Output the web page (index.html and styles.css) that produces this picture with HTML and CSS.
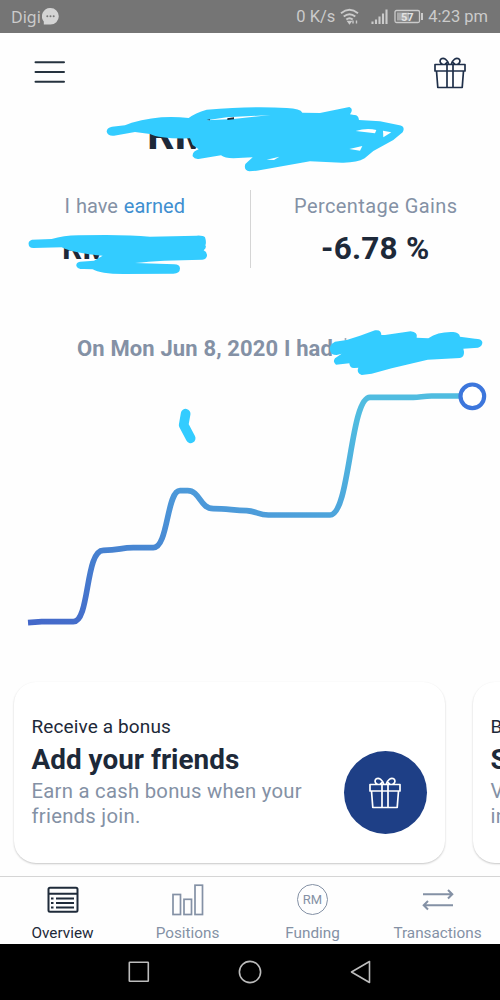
FILE: index.html
```
<!DOCTYPE html>
<html lang="en">
<head>
<meta charset="utf-8">
<title>Overview</title>
<link rel="stylesheet" href="styles.css">
</head>
<body>
<svg class="defs" width="0" height="0">
  <symbol id="gift" viewBox="0 0 32 32">
    <path d="M1 7.500H31V14H1ZM2.500 14L3.800 30.500H28.200L29.500 14M13 7.500V30.500M19 7.500V30.500M9 7.500C6 6.500 5.200 3.500 7.200 1.800C10 .2 13 2.500 14.800 7.200M11 7.300L14 4.500M23 7.500C26 6.500 26.800 3.500 24.800 1.800C22 .2 19 2.500 17.200 7.200M21 7.300L18 4.500"/>
  </symbol>
</svg>
<div class="phone">
  <div class="status">
    <span class="carrier">Digi</span>
    <svg class="bubble" width="17" height="17" viewBox="0 0 17 17"><path d="M8.5 0A8.3 8.3 0 1 1 8.5 16.6H1.8V13.5A8.3 8.3 0 0 1 8.5 0Z" fill="#d4d4d4"/><g fill="#777"><circle cx="5.3" cy="8.3" r="1"/><circle cx="8.5" cy="8.3" r="1"/><circle cx="11.7" cy="8.3" r="1"/></g></svg>
    <span class="speed">0 K/s</span>
    <svg class="signals" width="84" height="18" viewBox="0 0 84 18" fill="none" stroke="#cbcbcb">
      <path d="M1 5.2Q9.500-1.600 18 5.200M3.700 8.500Q9.500 3.800 15.300 8.500M6.300 11.500Q9.500 8.900 12.700 11.500" stroke-width="1.900"/>
      <path d="M8 13.500H11L9.500 15.500ZM13 12.500V15.500M16.500 12.500V15.500" stroke-width="1.400"/>
      <path d="M32.500 16V13.500M36 16V11.500M39.500 16V8.500M43 16V5.500M46.500 16V1.500" stroke-width="2.100"/>
      <rect x="55" y="2.500" width="24.500" height="12" rx="1.500" stroke-width="1.300"/>
      <rect x="57" y="4.500" width="12" height="8" fill="#aaa" stroke="none"/>
      <path d="M82 5V12" stroke-width="2"/>
      <text class="charge" x="61" y="13" stroke="none" fill="#e2e2e2">57</text>
    </svg>
    <span class="time">4:23 pm</span>
  </div>

  <header class="header">
    <svg width="32" height="24" viewBox="0 0 32 24" stroke="#26333f" stroke-width="2" stroke-linecap="round"><path d="M1.500 2.200H30M1.500 12H30M1.500 21.800H30"/></svg>
    <svg class="gift" width="32" height="32"><use href="#gift"/></svg>
  </header>

  <section class="balance">
    <span class="balance-value">RM</span>
    <svg class="scribble scribble-balance" viewBox="0 0 990 270">
      <path d="M66 95Q50 98 50 110Q54 124 72 122L135 111L180 117Q210 132 300 130L308 150L326 163Q306 170 308 184Q314 194 330 191L393 181Q404 190 430 190L488 187L466 207Q460 226 478 229L500 227L660 199L755 203Q800 204 824 190L850 168L910 135L938 112Q948 93 925 90L870 79L807 75Q805 59 792 60L780 58Q792 42 778 36L690 54L637 53Q632 41 590 39Q490 32 350 44Q315 54 296 69Q210 58 125 83L105 91Z" fill="#33ccff"/>
      <g fill="#fff"><path d="M350 76L410 67L542 60L430 72Z"/><path d="M797 108Q830 98 859 105L855 115Z"/><path d="M879 107L904 112L880 127Z"/><path d="M778 162L817 153L810 167Z"/><path d="M530 194L568 185L552 195Z"/></g>
      <path d="M412 70L432 67V73L412 75ZM350 75L360 73V76Z" fill="#1d2939"/>
    </svg>
  </section>

  <section class="stats">
    <div class="stat">
      <div class="stat-label earned">I have <span class="link">earned</span></div>
      <div class="stat-value hidden-value">RM</div>
      <svg class="scribble scribble-earned" viewBox="0 0 750 300"><path d="M96 164Q84 168 86 178Q86 189 100 189L185 187Q220 205 308 212L282 227L240 230Q228 232 229 242Q232 253 252 252L278 253Q300 267 370 267L520 266Q540 266 540 250Q539 238 523 238L405 234Q480 225 607 224Q622 221 621 209Q620 200 611 196Q621 187 616 181Q620 172 615 157Q610 151 590 152L450 155Q370 147 235 151Q190 152 155 162Z" fill="#33ccff"/></svg>
    </div>
    <div class="stat">
      <div class="stat-label gains">Percentage Gains</div>
      <div class="stat-value">-6.78 %</div>
    </div>
  </section>

  <section class="history">
    <h2 class="history-title">On Mon Jun 8, 2020 I had</h2>
    <svg class="chart" width="500" height="270" viewBox="0 0 1500 810" fill="none">
      <defs><linearGradient id="line" gradientUnits="userSpaceOnUse" x1="350" y1="900" x2="800" y2="0"><stop offset="0" stop-color="#4467c9"/><stop offset=".3" stop-color="#4681d0"/><stop offset=".55" stop-color="#4c98d9"/><stop offset="1" stop-color="#50bce0"/></linearGradient></defs>
      <path d="M84 758L125 755H220C270 755 255 541 310 541C360 541 360 533 400 533H460C505 533 500 362 540 362H563C600 362 600 416 640 416C680 416 700 421 740 422C770 424 775 435 805 435H990C1050 435 1050 82 1110 82H1240C1260 82 1270 78 1295 78H1380" stroke="url(#line)" stroke-width="17"/>
      <circle cx="1417" cy="79" r="35.500" fill="#fff" stroke="#3c76dc" stroke-width="12.500"/>
      <path d="M557 131L551 165L572 205" stroke="#33ccff" stroke-width="29" stroke-linecap="round" stroke-linejoin="round"/>
    </svg>
    <svg class="scribble scribble-history" viewBox="0 0 1320 390"><path d="M854 54L859 54V62H854Z" fill="#a0abba"/><path d="M825 65Q806 75 810 90Q811 105 830 105L845 101L825 115Q817 125 828 134L868 130Q869 145 883 144L895 143Q888 158 905 165L935 161L995 145L1103 119L1200 114Q1213 111 1212 95L1210 86L1254 83Q1268 78 1267 66Q1265 56 1245 56L1200 50Q1198 38 1180 36Q1135 34 1105 55L1070 53Q1074 36 1052 34L975 45L964 45Q964 28 945 31L900 47L860 60Z" fill="#33ccff"/></svg>
  </section>

  <section class="cards">
    <article class="card">
      <div class="card-copy">
        <div class="card-kicker">Receive a bonus</div>
        <h3 class="card-title">Add your friends</h3>
        <p class="card-text">Earn a cash bonus when your<br>friends join.</p>
      </div>
      <div class="card-badge"><svg class="gift gift-light" width="32" height="32"><use href="#gift"/></svg></div>
    </article>
    <article class="card card-next">
      <div class="card-copy">
        <div class="card-kicker">B</div>
        <h3 class="card-title">S</h3>
        <p class="card-text">V<br>in</p>
      </div>
    </article>
  </section>

  <nav class="tabs">
    <div class="tab active">
      <svg width="32" height="32" viewBox="0 0 32 32" fill="none" stroke="#1f2b3a" stroke-width="2"><rect x="1.500" y="3.800" width="29" height="24" rx="1.500"/><path d="M1 9.800H31M9 14.500H27M9 19H27M9 23.500H27M4 14.500H6.500M4 19H6.500M4 23.500H6.500"/></svg>
      <span class="tab-label overview">Overview</span>
    </div>
    <div class="tab">
      <svg width="32" height="32" viewBox="0 0 32 32" fill="none" stroke="#8491a5" stroke-width="1.700"><rect x="1" y="10.500" width="7.500" height="20"/><rect x="12" y="15.300" width="7.500" height="15.200"/><rect x="23" y="1.200" width="7.500" height="29.300"/></svg>
      <span class="tab-label positions">Positions</span>
    </div>
    <div class="tab">
      <span class="currency">RM</span>
      <span class="tab-label funding">Funding</span>
    </div>
    <div class="tab">
      <svg width="32" height="32" viewBox="0 0 32 32" fill="none" stroke="#8491a5" stroke-width="2"><path d="M1 10.200H30M26 6L30.300 10.200L26 14.500M31 21.200H2M6 17L1.700 21.200L6 25.500"/></svg>
      <span class="tab-label transactions">Transactions</span>
    </div>
  </nav>

  <div class="system">
    <svg width="24" height="24" viewBox="0 0 24 24" fill="none" stroke="#bdbdbd" stroke-width="1.600"><rect x="2.300" y="2.300" width="19" height="19" rx=".5"/></svg>
    <svg width="24" height="24" viewBox="0 0 24 24" fill="none" stroke="#bdbdbd" stroke-width="1.600"><circle cx="12" cy="12" r="10.600"/></svg>
    <svg width="24" height="24" viewBox="0 0 24 24" fill="none" stroke="#bdbdbd" stroke-width="1.600" stroke-linejoin="round"><path d="M20.500 1.500V22.500L2.500 12Z"/></svg>
  </div>
</div>
</body>
</html>
```
FILE: styles.css
```
* { box-sizing: border-box; }
body { margin: 0; background: #fefefe; font-family: Roboto, "Liberation Sans", sans-serif; color: #1d2939; }
h2, h3, p { margin: 0; }
svg { display: block; flex: none; }
.defs { position: absolute; }
.phone { width: 500px; height: 1000px; display: flex; flex-direction: column; overflow: hidden; background: #fefefe; }
.phone > * { flex: none; }
.gift { fill: none; stroke: #1f2f49; stroke-width: 1.7; stroke-linejoin: round; }
.gift-light { stroke: #fff; }

.status { height: 33px; background: #757575; color: #cbcbcb; display: flex; align-items: center; padding: 0 12px 0 11px; white-space: nowrap; font-size: 16.5px; }
.carrier { font-family: "Noto Sans", sans-serif; font-size: 16px; }
.bubble { margin-left: 1px; }
.speed { margin-left: auto; }
.signals { margin: 0 4px 0 5px; }
.charge { font: bold 11px Roboto, sans-serif; }

.header { height: 72px; display: flex; justify-content: space-between; padding: 24px 34px 0; }
.header > svg:first-child { margin-top: 3px; }

.balance { position: relative; height: 85px; padding: 4px 0 0 147px; }
.balance-value { font-size: 43px; line-height: 50px; font-weight: 700; }
.scribble { position: absolute; }
.scribble-balance { left: 90px; top: -10px; width: 330px; height: 90px; }

.stats { display: flex; height: 78px; }
.stat { position: relative; flex: 1; text-align: center; }
.stat:first-child { border-right: 1px solid #d5d5d5; }
.stat-label { font-size: 20px; line-height: 24px; padding-top: 4px; color: #8491a5; }
.earned { word-spacing: 1px; }
.gains { letter-spacing: .42px; padding-left: 1px; }
.link { color: #3f8fd0; }
.stat-value { font-size: 31.5px; line-height: 36px; margin-top: 13px; font-weight: 700; letter-spacing: .2px; }
.hidden-value { text-align: left; padding-left: 62px; }
.scribble-earned { left: 0; top: -5px; width: 250px; height: 100px; }

.history { position: relative; height: 412px; padding-top: 67px; }
.history-title { padding-left: 77px; height: 35px; font-size: 22px; line-height: 28px; font-weight: 700; color: #8491a5; letter-spacing: .14px; white-space: nowrap; }
.scribble-history { left: 60px; top: 52px; width: 440px; height: 130px; }

.cards { height: 196px; padding: 2px 0 0 14px; display: flex; gap: 28px; overflow: hidden; }
.card { flex: none; width: 431px; height: 181px; padding: 33px 17.5px 0; border-radius: 22px; background: #fff; box-shadow: 0 1px 2px rgba(0, 0, 0, .22); display: flex; justify-content: space-between; white-space: nowrap; }
.card-kicker { font-size: 19px; line-height: 24px; letter-spacing: .12px; }
.card-title { font-size: 27.9px; line-height: 36px; margin-top: 3px; font-weight: 700; }
.card-text { font-size: 20.3px; line-height: 25px; margin-top: 1px; color: #8491a5; letter-spacing: .26px; }
.card-badge { width: 83px; height: 83px; margin: 36px 1px 0 0; border-radius: 50%; background: #1e3f86; display: flex; align-items: center; justify-content: center; }

.tabs { height: 68px; border-top: 1px solid #d5d5d5; display: flex; }
.tab { width: 125px; padding-top: 7px; display: flex; flex-direction: column; align-items: center; color: #8491a5; }
.tab-label { font-size: 15.3px; line-height: 20px; margin-top: 7px; }
.active { color: #1d2939; }
.currency { width: 31px; height: 31px; margin-bottom: 1px; border: 1.5px solid #8491a5; border-radius: 50%; font-size: 13px; line-height: 29px; text-align: center; }

.system { height: 56px; background: #000; display: flex; justify-content: center; align-items: center; gap: 87px; }
```
